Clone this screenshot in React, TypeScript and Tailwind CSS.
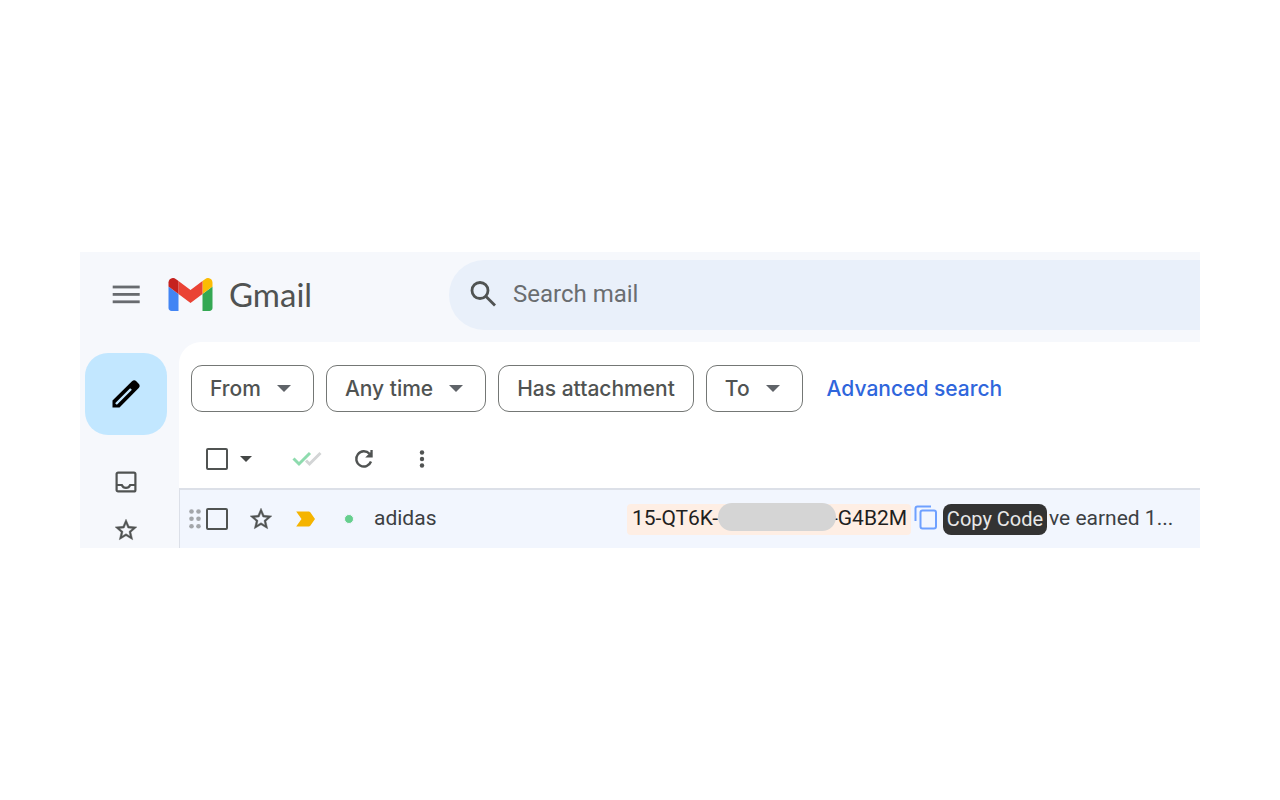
import { useState } from "react";
import type { ReactNode } from "react";

function MenuIcon() {
  return (
    <svg width="28" height="20" viewBox="0 0 28 20" fill="#686b6f" aria-hidden="true">
      <rect x="0.7" y="0.600" width="27" height="2.800" />
      <rect x="0.7" y="8" width="27" height="2.800" />
      <rect x="0.7" y="15.400" width="27" height="2.800" />
    </svg>
  );
}

function GmailLogo() {
  return (
    <svg width="45" height="33" viewBox="51 42 90 66" aria-hidden="true">
      <path fill="#4285f4" d="M58 108h14V74L52 59v43c0 3.320 2.690 6 6 6" />
      <path fill="#34a853" d="M120 108h14c3.320 0 6-2.690 6-6V59l-20 15" />
      <path fill="#fbbc04" d="M120 48v26l20-15v-8c0-7.420-8.470-11.650-14.400-7.200" />
      <path fill="#ea4335" d="M72 74V48l24 18 24-18v26L96 92" />
      <path fill="#c5221f" d="M52 51v8l20 15V48l-5.600-4.200c-5.940-4.450-14.400-.22-14.400 7.200" />
    </svg>
  );
}

function SearchIcon() {
  return (
    <svg width="27" height="26" viewBox="0 0 27 26" fill="none" stroke="#505352" strokeWidth="2.800" aria-hidden="true">
      <circle cx="10" cy="9.500" r="8" />
      <path d="M15.500 15L25 24.500" />
    </svg>
  );
}

function PencilIcon() {
  return (
    <svg width="28" height="28" viewBox="0 0 28 28" aria-hidden="true">
      <path
        fill="#000"
        d="M.5 27.500v-7L20 1.300c1.400-1.300 3-1.300 4.300 0l2.400 2.400c1.300 1.400 1.300 2.900 0 4.200L7.500 27.500z"
      />
      <path stroke="#c2e7ff" strokeWidth="2.400" d="M4 24L19 9" />
    </svg>
  );
}

function InboxIcon() {
  return (
    <svg width="22" height="22" viewBox="0 0 22 22" fill="none" stroke="#505352" strokeWidth="2.200" aria-hidden="true">
      <rect x="1.600" y="1.600" width="18.800" height="18.800" rx="1.500" />
      <path d="M2 14h4.800c.8 1.900 2.200 2.900 4.200 2.900s3.400-1 4.200-2.900H20" />
    </svg>
  );
}

function StarIcon() {
  return (
    <svg
      width="26"
      height="26"
      viewBox="0 0 24 24"
      fill="#505352"
      stroke="#505352"
      strokeWidth="0.400"
      aria-hidden="true"
    >
      <path d="M22 9.240l-7.190-.62L12 2 9.190 8.630 2 9.240l5.460 4.730L5.820 21 12 17.270 18.180 21l-1.630-7.030L22 9.240zM12 15.400l-3.760 2.270 1-4.280-3.320-2.880 4.380-.38L12 6.100l1.710 4.040 4.380.38-3.320 2.880 1 4.280L12 15.400z" />
    </svg>
  );
}

function Caret({ className }: { className: string }) {
  return (
    <svg className={className} viewBox="0 0 14 7" fill="currentColor" aria-hidden="true">
      <path d="M0 0h14L7 7z" />
    </svg>
  );
}

function DoubleCheckIcon() {
  return (
    <svg width="30" height="16" viewBox="0 0 30 16" fill="none" strokeWidth="3" aria-hidden="true">
      <path stroke="#d3d5d6" d="M14 9.500l3.500 3.500L28.500 2" />
      <path stroke="#8edbae" d="M1.500 7.500L7 13 18 2" />
    </svg>
  );
}

function RefreshIcon() {
  return (
    <svg width="20" height="20" viewBox="0 0 20 20" fill="none" stroke="#505352" strokeWidth="2.400" aria-hidden="true">
      <path d="M17 12.500A7.600 7.600 0 1 1 15.500 4.800" />
      <path fill="#505352" stroke="none" d="M18.700 1V8.500H11.200L14 5.700 16.400 3.300V1z" />
    </svg>
  );
}

function MoreIcon() {
  return (
    <svg width="6" height="19" viewBox="0 0 6 19" fill="#505352" aria-hidden="true">
      <circle cx="3" cy="2.500" r="2.200" />
      <circle cx="3" cy="9" r="2.200" />
      <circle cx="3" cy="15.500" r="2.200" />
    </svg>
  );
}

function DragHandle() {
  return (
    <svg width="14" height="21" viewBox="0 0 14 21" fill="#a3a6aa" aria-hidden="true">
      {[2.5, 9.8, 17.2].map((y) => (
        <g key={y}>
          <circle cx="3.500" cy={y} r="2.300" />
          <circle cx="10.500" cy={y} r="2.300" />
        </g>
      ))}
    </svg>
  );
}

function ImportantIcon() {
  return (
    <svg width="20" height="16" viewBox="0 0 20 16" fill="#f5b400" aria-hidden="true">
      <path d="M.2.500h12.500c.7 0 1.200.3 1.600.8L19 8l-4.700 6.700c-.4.500-.9.800-1.600.8H.2L5.500 8z" />
    </svg>
  );
}

function CopyIcon() {
  return (
    <svg width="24" height="25" viewBox="0 0 24 25" fill="none" stroke="#6ea0ff" strokeWidth="2" aria-hidden="true">
      <path d="M1.500 16V3.500c0-1.300.7-2 2-2H17" />
      <rect x="6.500" y="5.500" width="15.500" height="18" rx="2" />
    </svg>
  );
}

function FilterChip({ children, caret = false }: { children: ReactNode; caret?: boolean }) {
  return (
    <button
      type="button"
      aria-haspopup={caret ? "menu" : undefined}
      className="flex h-[47px] items-center rounded-[11px] border border-[#747775] px-[18px] font-['Inter',sans-serif] text-[21px] font-medium text-[#505352]"
    >
      {children}
      {caret ? <Caret className="mr-1 ml-4 h-[7px] w-[14px] text-[#5f6368]" /> : null}
    </button>
  );
}

function CheckBox({ label }: { label: string }) {
  return (
    <input
      type="checkbox"
      aria-label={label}
      className="size-[22px] shrink-0 appearance-none rounded-[2px] border-2 border-[#505352] checked:bg-[#505352]"
    />
  );
}

function Header() {
  return (
    <header className="flex h-[90px] items-center pb-[5px]">
      <div className="flex w-[369px] shrink-0 items-center pl-8">
        <button type="button" aria-label="Main menu">
          <MenuIcon />
        </button>
        <a href="#inbox" className="ml-7 flex items-center gap-4">
          <GmailLogo />
          <span className="pb-[2px] font-['Lato',sans-serif] text-[33px] leading-10 text-[#505352]">Gmail</span>
        </a>
      </div>
      <form
        role="search"
        className="flex h-[70px] min-w-0 flex-1 items-center rounded-l-full bg-[#e9f0fa] pb-[2px] pl-[21px]"
      >
        <button type="button" aria-label="Search">
          <SearchIcon />
        </button>
        <input
          type="text"
          aria-label="Search mail"
          placeholder="Search mail"
          className="ml-4 min-w-0 flex-1 bg-transparent text-[24px] leading-8 outline-none placeholder:text-[#6a6d70]"
        />
      </form>
    </header>
  );
}

function Sidebar() {
  return (
    <nav className="flex w-[99px] shrink-0 flex-col items-center pt-[11px] pr-[7px]">
      <button
        type="button"
        aria-label="Compose"
        className="flex size-[82px] items-center justify-center rounded-[23px] bg-[#c2e7ff]"
      >
        <PencilIcon />
      </button>
      <a href="#inbox" aria-label="Inbox" className="mt-[23px] flex h-12 items-center">
        <InboxIcon />
      </a>
      <a href="#starred" aria-label="Starred" className="flex h-[42px] items-end pb-[5px]">
        <StarIcon />
      </a>
    </nav>
  );
}

function Toolbar() {
  return (
    <div className="mt-[18px] flex h-[58px] items-center pl-[27px]">
      <CheckBox label="Select all" />
      <button type="button" aria-label="Select options" className="ml-3 text-[#444746]">
        <Caret className="h-[6px] w-[12px]" />
      </button>
      <button type="button" aria-label="Mark all as read" className="ml-10">
        <DoubleCheckIcon />
      </button>
      <button type="button" aria-label="Refresh" className="ml-8">
        <RefreshIcon />
      </button>
      <button type="button" aria-label="More" className="ml-[45px]">
        <MoreIcon />
      </button>
    </div>
  );
}

function MailRow() {
  const [copied, setCopied] = useState(false);

  return (
    <div className="flex h-[60px] items-center border-t-2 border-l border-[#dce0e8] bg-[#f2f6fe] pl-2 text-[21px] text-[#3c4043]">
      <DragHandle />
      <div className="ml-1 flex">
        <CheckBox label="Select conversation" />
      </div>
      <button type="button" aria-label="Star" className="ml-5">
        <StarIcon />
      </button>
      <button type="button" aria-label="Important" className="ml-[22px]">
        <ImportantIcon />
      </button>
      <span className="ml-7 size-[10px] shrink-0 rounded-full border border-[#f2f6fe] bg-[#66cf8e]" />
      <span className="ml-5 w-[253px] shrink-0">adidas</span>

      {/* code with its middle part redacted */}
      <div className="flex h-[31px] w-[284px] shrink-0 items-center rounded-[4px] bg-[#feeee4] pl-[5px] text-[21px] text-[#1f1f1f]">
        <span className="w-[86px] whitespace-nowrap">15-QT6K-</span>
        <span className="z-10 mb-[5px] h-7 w-[118px] shrink-0 rounded-full bg-[#d5d5d5]" />
        <span className="-ml-1 whitespace-nowrap">-G4B2M</span>
      </div>
      <button type="button" aria-label="Copy" className="mb-1 ml-[3px]" onClick={() => setCopied(true)}>
        <CopyIcon />
      </button>
      <span
        role="tooltip"
        className="ml-[5px] flex h-[31px] w-[104px] shrink-0 items-center justify-center rounded-[8px] bg-[#333333] text-[20px] whitespace-nowrap text-[#e8e8e8]"
      >
        {copied ? "Copied" : "Copy Code"}
      </span>
      <span className="ml-[2px] min-w-0 truncate">ve earned 1...</span>
    </div>
  );
}

export default function App() {
  return (
    <div className="flex min-h-screen items-center bg-white px-20 font-['Roboto',sans-serif]">
      <section className="min-w-0 flex-1 overflow-hidden bg-[#f6f8fc]">
        <Header />
        <div className="flex">
          <Sidebar />
          <main className="min-w-0 flex-1 rounded-tl-[22px] bg-white pt-[23px]">
            <div className="flex items-center gap-3 pl-3">
              <FilterChip caret>From</FilterChip>
              <FilterChip caret>Any time</FilterChip>
              <FilterChip>Has attachment</FilterChip>
              <FilterChip caret>To</FilterChip>
              <a href="#advanced" className="ml-3 font-['Inter',sans-serif] text-[21px] font-medium text-[#2f66dc]">
                Advanced search
              </a>
            </div>
            <Toolbar />
            <MailRow />
          </main>
        </div>
      </section>
    </div>
  );
}
